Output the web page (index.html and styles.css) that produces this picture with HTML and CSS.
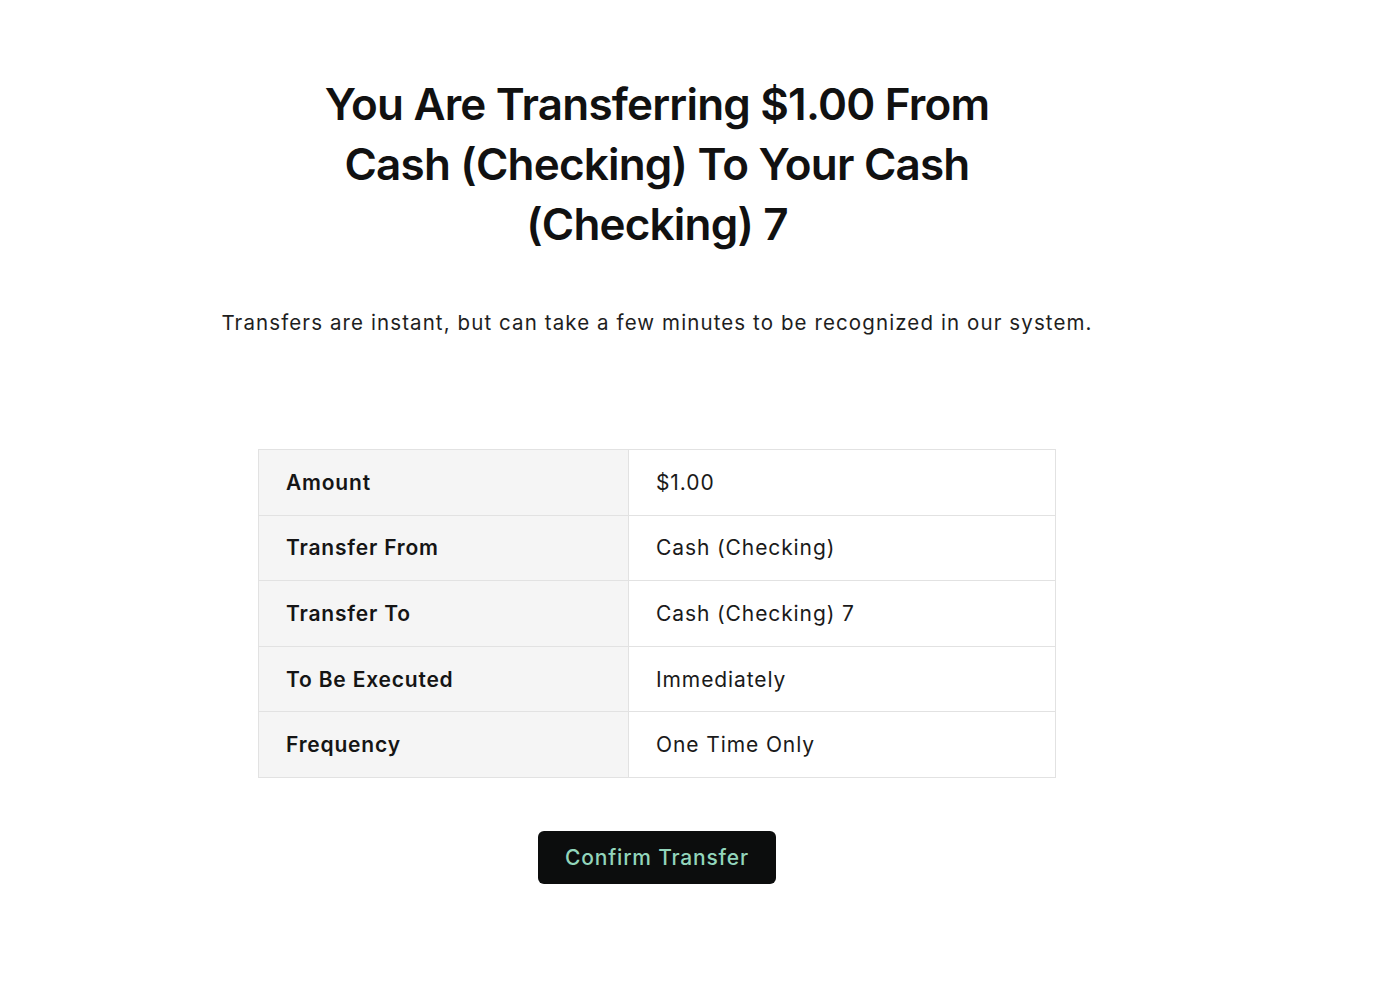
FILE: index.html
```html
<!DOCTYPE html>
<html lang="en">
<head>
  <meta charset="UTF-8">
  <title>Confirm Transfer</title>
  <link rel="stylesheet" href="styles.css">
</head>
<body>
  <div class="page">
    <h1 class="title">You Are Transferring $1.00 From Cash (Checking) To Your Cash (Checking) 7</h1>
    <p class="note">Transfers are instant, but can take a few minutes to be recognized in our system.</p>
    <table class="summary">
      <tbody>
        <tr>
          <th>Amount</th>
          <td>$1.00</td>
        </tr>
        <tr>
          <th>Transfer From</th>
          <td>Cash (Checking)</td>
        </tr>
        <tr>
          <th>Transfer To</th>
          <td>Cash (Checking) 7</td>
        </tr>
        <tr>
          <th>To Be Executed</th>
          <td>Immediately</td>
        </tr>
        <tr>
          <th>Frequency</th>
          <td>One Time Only</td>
        </tr>
      </tbody>
    </table>
    <button class="confirm" type="button">Confirm Transfer</button>
  </div>
</body>
</html>
```

FILE: styles.css
```css
/* Base */
body {
  margin: 0;
  background: #fff;
  color: #111;
  font-family: Inter, "Noto Sans", sans-serif;
}
.page {
  width: 1314px;
  display: flex;
  flex-direction: column;
  align-items: center;
  padding-top: 74px;
}
.title {
  width: 700px;
  margin: 0;
  font-size: 44px;
  line-height: 60px;
  font-weight: 600;
  letter-spacing: -0.8px;
  text-align: center;
  color: #111;
}
.note {
  margin: 54px 0 0;
  font-size: 20.5px;
  line-height: 30px;
  letter-spacing: 1.1px;
  color: #1e1e1e;
  text-align: center;
}
.summary {
  width: 798px;
  margin-top: 111px;
  border-collapse: collapse;
  font-size: 21px;
}
.summary th,
.summary td {
  height: 65.6px;
  padding: 0 27px;
  border: 1px solid #e2e2e2;
  text-align: left;
  box-sizing: border-box;
}
.summary th {
  width: 370px;
  background: #f5f5f5;
  font-weight: 600;
  letter-spacing: 0.8px;
  color: #151515;
}
.summary td {
  font-weight: 400;
  color: #1a1a1a;
  letter-spacing: 0.9px;
}
.confirm {
  margin-top: 53px;
  width: 238px;
  height: 53px;
  border: 0;
  border-radius: 6px;
  background: #0c0d0d;
  color: #92d5bb;
  font-family: inherit;
  font-size: 21px;
  font-weight: 500;
  letter-spacing: 0.8px;
  cursor: pointer;
}
```
